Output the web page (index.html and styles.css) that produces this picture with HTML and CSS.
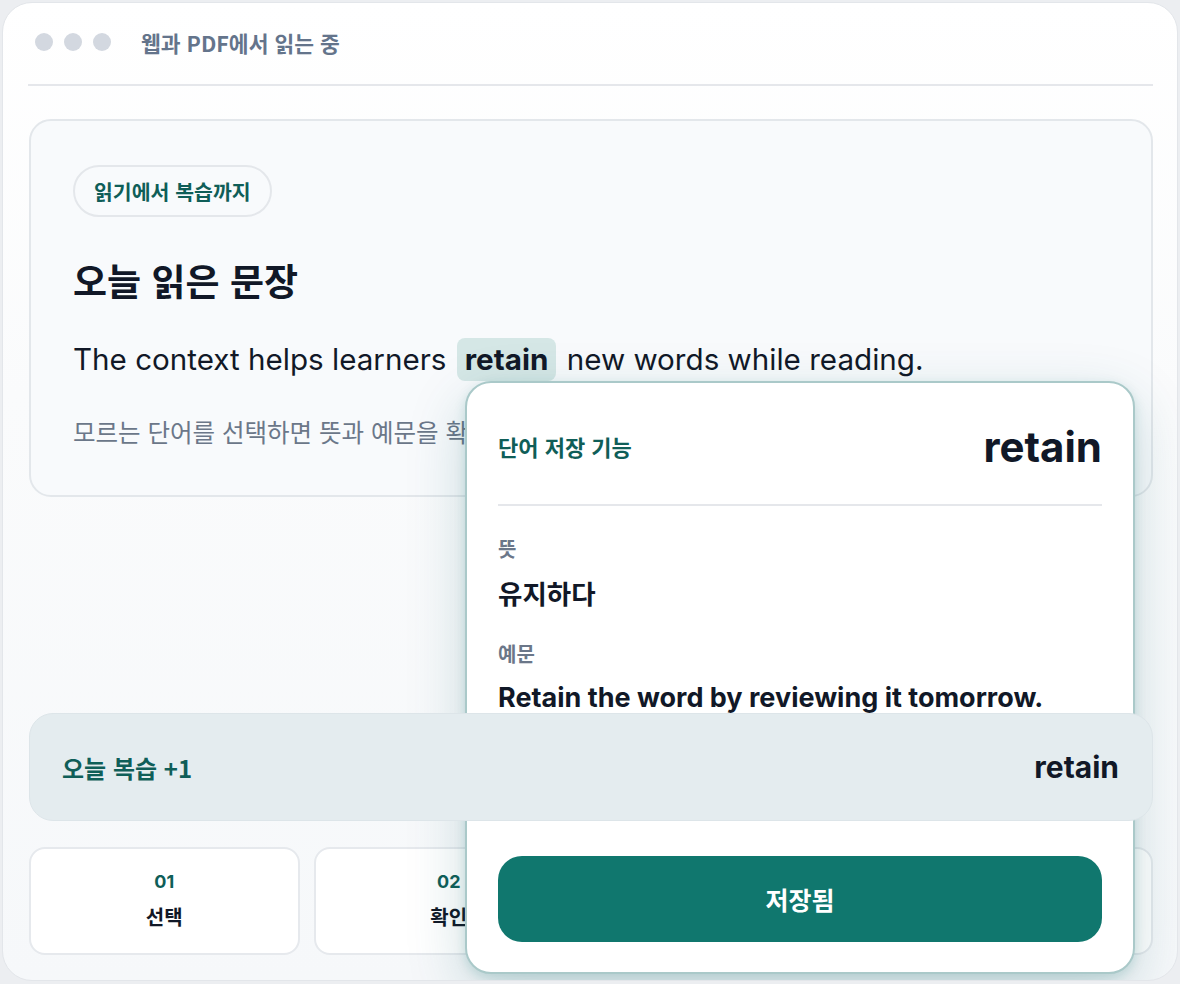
FILE: index.html
```html
<!DOCTYPE html>
<html lang="ko">
<head>
<meta charset="utf-8">
<title>읽기에서 복습까지</title>
<link rel="stylesheet" href="styles.css">
</head>
<body>
<div class="frame">
  <header class="titlebar">
    <div class="dots"><span class="dot"></span><span class="dot"></span><span class="dot"></span></div>
    <span class="title">웹과 PDF에서 읽는 중</span>
  </header>

  <section class="reader">
    <span class="chip">읽기에서 복습까지</span>
    <h1 class="heading">오늘 읽은 문장</h1>
    <p class="sentence">The context helps learners <mark class="hl">retain</mark> new words while reading.</p>
    <p class="hint">모르는 단어를 선택하면 뜻과 예문을 확인하고 바로 저장할 수 있어요.</p>
  </section>

  <aside class="popup">
    <div class="popup-head">
      <span class="popup-label">단어 저장 기능</span>
      <span class="popup-word">retain</span>
    </div>
    <div class="popup-meta">뜻</div>
    <div class="popup-value">유지하다</div>
    <div class="popup-meta meta-gap">예문</div>
    <div class="popup-example">Retain the word by reviewing it tomorrow.</div>
    <button class="save-btn" type="button">저장됨</button>
  </aside>

  <div class="review-bar">
    <span class="review-label">오늘 복습 +1</span>
    <span class="review-word">retain</span>
  </div>

  <div class="steps">
    <div class="step"><span class="step-num">01</span><span class="step-name">선택</span></div>
    <div class="step"><span class="step-num">02</span><span class="step-name">확인</span></div>
    <div class="step"><span class="step-num">03</span><span class="step-name">저장</span></div>
    <div class="step"><span class="step-num">04</span><span class="step-name">복습</span></div>
  </div>
</div>
</body>
</html>
```
FILE: styles.css
```css
* { box-sizing: border-box; }

html, body {
  margin: 0;
  padding: 0;
  background: #eceef1;
}

body {
  font-family: Inter, "Noto Sans CJK KR", "Noto Sans", sans-serif;
  color: #111827;
  width: 1180px;
  height: 984px;
  overflow: hidden;
}

.frame {
  position: relative;
  margin: 2px 0 0 2px;
  width: 1176px;
  height: 979px;
  border: 1px solid #e3e6ea;
  border-radius: 30px;
  background: linear-gradient(180deg, #ffffff 0%, #fafbfc 40%, #f6f8fa 100%);
  padding: 0 24px 25px 26px;
  display: flex;
  flex-direction: column;
  overflow: hidden;
}

.titlebar {
  height: 83px;
  border-bottom: 2px solid #e5e7eb;
  display: flex;
  align-items: center;
  padding: 0 0 3px 7px;
  flex-shrink: 0;
  margin-left: -1px;
}

.dots { display: flex; gap: 11px; }

.dot {
  width: 18px;
  height: 18px;
  border-radius: 50%;
  background: #d3d8e0;
}

.title {
  margin-left: 30px;
  font-size: 21.5px;
  font-weight: 700;
  color: #64748b;
  font-family: "Noto Sans CJK KR", sans-serif;
}

.reader {
  margin-top: 33px;
  border: 2px solid #e3e7eb;
  border-radius: 22px;
  background: #f8fafc;
  padding: 44px 42px 47px;
  flex-shrink: 0;
}

.chip {
  display: inline-flex;
  align-items: center;
  height: 52px;
  padding: 0 19px;
  border: 2px solid #e4e7eb;
  border-radius: 26px;
  font-family: "Noto Sans CJK KR", sans-serif;
  font-size: 20.5px;
  font-weight: 700;
  color: #0f5e58;
}

.heading {
  margin: 41px 0 0;
  font-family: "Noto Sans CJK KR", sans-serif;
  font-size: 37px;
  line-height: 44px;
  font-weight: 700;
  color: #111827;
}

.sentence {
  margin: 35px 0 0;
  font-size: 29.6px;
  line-height: 44px;
  color: #111827;
}

.hl {
  background: #d5e7e6;
  color: #111827;
  font-weight: 700;
  padding: 3px 8px 4px;
  border-radius: 8px;
  margin: 0 2px;
}

.hint {
  margin: 35px 0 0;
  font-size: 24.5px;
  line-height: 32px;
  color: #6b7789;
  white-space: nowrap;
  font-family: "Noto Sans CJK KR", sans-serif;
}

.popup {
  position: absolute;
  left: 462px;
  top: 378px;
  width: 670px;
  height: 593px;
  z-index: 2;
  background: #ffffff;
  border: 2px solid #aac9c9;
  border-radius: 26px;
  padding: 37px 31px 30px;
  display: flex;
  flex-direction: column;
  box-shadow: 0 20px 60px rgba(15, 90, 100, 0.2), 0 4px 12px rgba(15, 118, 110, 0.16);
}

.popup-head {
  height: 86px;
  padding-bottom: 32px;
  border-bottom: 2px solid #e5e7eb;
  display: flex;
  align-items: center;
  justify-content: space-between;
}

.popup-label {
  font-family: "Noto Sans CJK KR", sans-serif;
  font-size: 22px;
  font-weight: 700;
  color: #0f5e58;
}

.popup-word {
  font-size: 42px;
  font-weight: 700;
  color: #111827;
}

.popup-meta {
  margin-top: 31px;
  font-family: "Noto Sans CJK KR", sans-serif;
  font-size: 20px;
  line-height: 24px;
  font-weight: 700;
  color: #6b7789;
}

.meta-gap { margin-top: 32px; }

.popup-value {
  margin-top: 15px;
  font-family: "Noto Sans CJK KR", sans-serif;
  font-size: 26.5px;
  line-height: 34px;
  font-weight: 700;
  color: #111827;
}

.popup-example {
  margin-top: 15px;
  font-size: 27px;
  line-height: 34px;
  font-weight: 700;
  color: #111827;
  white-space: nowrap;
}

.save-btn {
  margin-top: auto;
  height: 86px;
  flex-shrink: 0;
  border: none;
  border-radius: 24px;
  background: #10776e;
  color: #ffffff;
  font-family: "Noto Sans CJK KR", sans-serif;
  font-size: 25px;
  font-weight: 700;
}

.review-bar {
  position: relative;
  z-index: 3;
  margin-top: auto;
  height: 108px;
  flex-shrink: 0;
  border: 1px solid #dde5e9;
  border-radius: 24px;
  background: #e4ecef;
  padding: 0 33px 0 32px;
  display: flex;
  align-items: center;
  justify-content: space-between;
}

.review-label {
  font-family: "Noto Sans CJK KR", sans-serif;
  font-size: 24px;
  font-weight: 700;
  color: #0f5e58;
}

.review-word {
  font-size: 30px;
  font-weight: 700;
  color: #111827;
}

.steps {
  margin-top: 26px;
  display: grid;
  grid-template-columns: repeat(4, 1fr);
  gap: 14px;
  flex-shrink: 0;
}

.step {
  height: 108px;
  background: #ffffff;
  border: 2px solid #e6e9ed;
  border-radius: 16px;
  display: flex;
  flex-direction: column;
  align-items: center;
  justify-content: center;
  gap: 10px;
}

.step-num {
  font-size: 18px;
  line-height: 22px;
  font-weight: 700;
  color: #0f5e58;
}

.step-name {
  font-family: "Noto Sans CJK KR", sans-serif;
  font-size: 20px;
  line-height: 28px;
  font-weight: 700;
  color: #111827;
}
```
